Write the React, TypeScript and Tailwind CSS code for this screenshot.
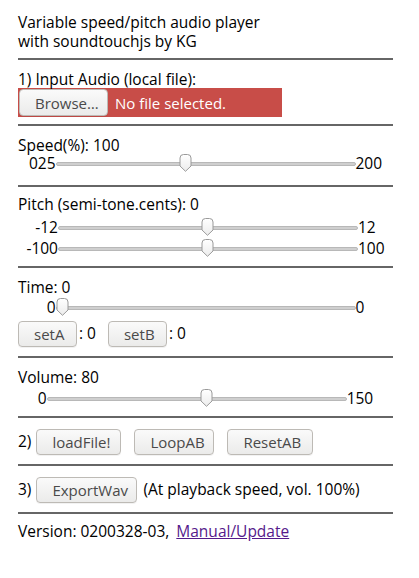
import React from "react";

const font = { fontFamily: '"Open Sans", "Noto Sans", sans-serif' };

function Hr({ className = "" }: { className?: string }) {
  return <div className={`h-[2px] bg-[#666666] ${className}`} />;
}

function Thumb() {
  return (
    <svg width="13" height="18" viewBox="0 0 13 18" className="block">
      <defs>
        <linearGradient id="tg" x1="0" y1="0" x2="0" y2="1">
          <stop offset="0" stopColor="#ffffff" />
          <stop offset="1" stopColor="#ececec" />
        </linearGradient>
      </defs>
      <path
        d="M1 4 Q1 0.5 4.5 0.5 L8.5 0.5 Q12 0.5 12 4 L12 12 L6.5 17.3 L1 12 Z"
        fill="url(#tg)"
        stroke="#9a9a9a"
        strokeWidth="1"
      />
    </svg>
  );
}

function Slider({ frac, width = 300 }: { frac: number; width?: number }) {
  const tw = 13;
  const left = frac * (width - tw);
  return (
    <div className="relative h-[20px]" style={{ width }}>
      <div className="absolute left-0 right-0 top-[9px] h-[4px] rounded-[2px] bg-[#cfcfcf] border border-[#b8b8b8]" />
      <div className="absolute top-[1px]" style={{ left }}>
        <Thumb />
      </div>
    </div>
  );
}

function SliderRow({ lo, hi, frac, className = "" }: { lo: string; hi: string; frac: number; className?: string }) {
  return (
    <div className={`flex items-center justify-center h-[20px] text-[15.5px] ${className}`}>
      <span className="leading-[16px]">{lo}</span>
      <Slider frac={frac} />
      <span className="leading-[16px]">{hi}</span>
    </div>
  );
}

function Btn({ children, className = "" }: { children: React.ReactNode; className?: string }) {
  return (
    <button
      className={`h-[26px] rounded-[4px] border border-[#bdbab5] bg-gradient-to-b from-[#fafafa] to-[#ebebea] text-[#4a4a4a] text-[15px] leading-[24px] px-[15px] shadow-[0_1px_0_rgba(0,0,0,0.05)] ${className}`}
      style={font}
    >
      {children}
    </button>
  );
}

export default function App() {
  return (
    <div className="w-[419px] h-[578px] bg-white text-black" style={font}>
      <div className="px-[18px] w-[411px]">
        <div className="pt-[13px] text-[15.5px] leading-[19px]">
          <div>Variable speed/pitch audio player</div>
          <div>with soundtouchjs by KG</div>
        </div>
        <Hr className="mt-[7px]" />
        <div className="mt-[10px] text-[15.5px] leading-[18px]">1) Input Audio (local file):</div>
        <div className="flex items-center w-[264px] h-[29px] bg-[#c84d48]">
          <Btn className="ml-[1px] h-[27px] w-[89px] px-0">Browse…</Btn>
          <span className="ml-[7px] text-white text-[15px] leading-[18px]">No file selected.</span>
        </div>
        <Hr className="mt-[7px]" />
        <div className="mt-[10px] text-[15.5px] leading-[18px]">Speed(%): 100</div>
        <SliderRow lo="025" hi="200" frac={75 / 175} className="-mt-[1px]" />
        <Hr className="mt-[12px]" />
        <div className="mt-[8px] text-[15.5px] leading-[18px]">Pitch (semi-tone.cents): 0</div>
        <SliderRow lo="-12" hi="12" frac={0.5} className="mt-[4px]" />
        <SliderRow lo="-100" hi="100" frac={0.5} className="mt-[1px]" />
        <Hr className="mt-[8px]" />
        <div className="mt-[10px] text-[15.5px] leading-[18px]">Time: 0</div>
        <SliderRow lo="0" hi="0" frac={0} className="mt-[1px]" />
        <div className="mt-[4px] flex items-center text-[15.5px]">
          <Btn className="w-[59px] px-0">setA</Btn>
          <span className="ml-[2px]">: 0</span>
          <Btn className="ml-[12px] w-[59px] px-0">setB</Btn>
          <span className="ml-[2px]">: 0</span>
        </div>
        <Hr className="mt-[9px]" />
        <div className="mt-[10px] text-[15.5px] leading-[18px]">Volume: 80</div>
        <SliderRow lo="0" hi="150" frac={80 / 150} className="mt-[2px]" />
        <Hr className="mt-[8px]" />
        <div className="mt-[11px] flex items-center text-[15.5px]">
          <span>2)</span>
          <Btn className="ml-[5px] w-[85px] px-0">loadFile!</Btn>
          <Btn className="ml-[13px] w-[80px] px-0">LoopAB</Btn>
          <Btn className="ml-[13px] w-[86px] px-0">ResetAB</Btn>
        </div>
        <Hr className="mt-[9px]" />
        <div className="mt-[11px] flex items-center text-[15.5px]">
          <span>3)</span>
          <Btn className="ml-[5px] w-[101px] px-0">ExportWav</Btn>
          <span className="ml-[6px]">(At playback speed, vol. 100%)</span>
        </div>
        <Hr className="mt-[9px]" />
        <div className="mt-[8px] text-[15.5px] leading-[18px]">
          Version: 0200328-03,{" "}
          <a href="#" className="ml-[3px] text-[#551a8b] underline">Manual/Update</a>
        </div>
      </div>
    </div>
  );
}
